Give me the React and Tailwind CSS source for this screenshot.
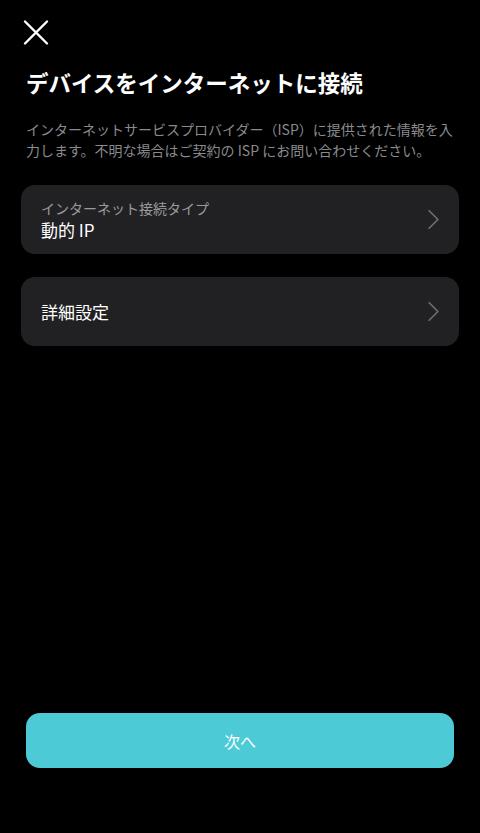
import { ChevronRight } from "lucide-react";

const font = { fontFamily: '"Noto Sans CJK JP", "Noto Sans", sans-serif' };

function Row({ label, value }) {
  return (
    <button className="flex h-[69px] w-full items-center justify-between rounded-[14px] bg-[#212123] pl-5 pr-[8px] text-left">
      <div className="flex flex-col">
        {label && <span className="text-[14px] leading-[20px] text-[#9a9a9e]">{label}</span>}
        <span className="text-[17px] leading-[24px] text-white">{value}</span>
      </div>
      <ChevronRight className="h-[35px] w-[35px] text-[#6e6e72]" strokeWidth={1.2} />
    </button>
  );
}

export default function App() {
  return (
    <div className="flex h-[833px] w-[480px] flex-col bg-black" style={font}>
      <div className="px-[22px] pt-[19px]">
        <svg width="28" height="28" viewBox="0 0 28 28" className="text-white">
          <path d="M3 2.5 L25 24.5 M25 2.5 L3 24.5" stroke="currentColor" strokeWidth="2.4" strokeLinecap="round" />
        </svg>
      </div>
      <h1 className="mt-[19px] px-[26px] text-[22.5px] font-bold leading-[32px] text-white">
        デバイスをインターネットに接続
      </h1>
      <p className="mt-[21px] px-[26px] text-[14px] leading-[21px] text-[#8a8a8e]">
        インターネットサービスプロバイダー（ISP）に提供された情報を入力します。不明な場合はご契約の ISP にお問い合わせください。
      </p>
      <div className="mt-[24px] flex flex-col gap-[23px] px-[21px]">
        <Row label="インターネット接続タイプ" value="動的 IP" />
        <Row value="詳細設定" />
      </div>
      <div className="mt-auto px-[26px] pb-[65px]">
        <button className="h-[55px] w-full rounded-[14px] bg-[#4ccbd6] text-[16px] text-white">次へ</button>
      </div>
    </div>
  );
}
